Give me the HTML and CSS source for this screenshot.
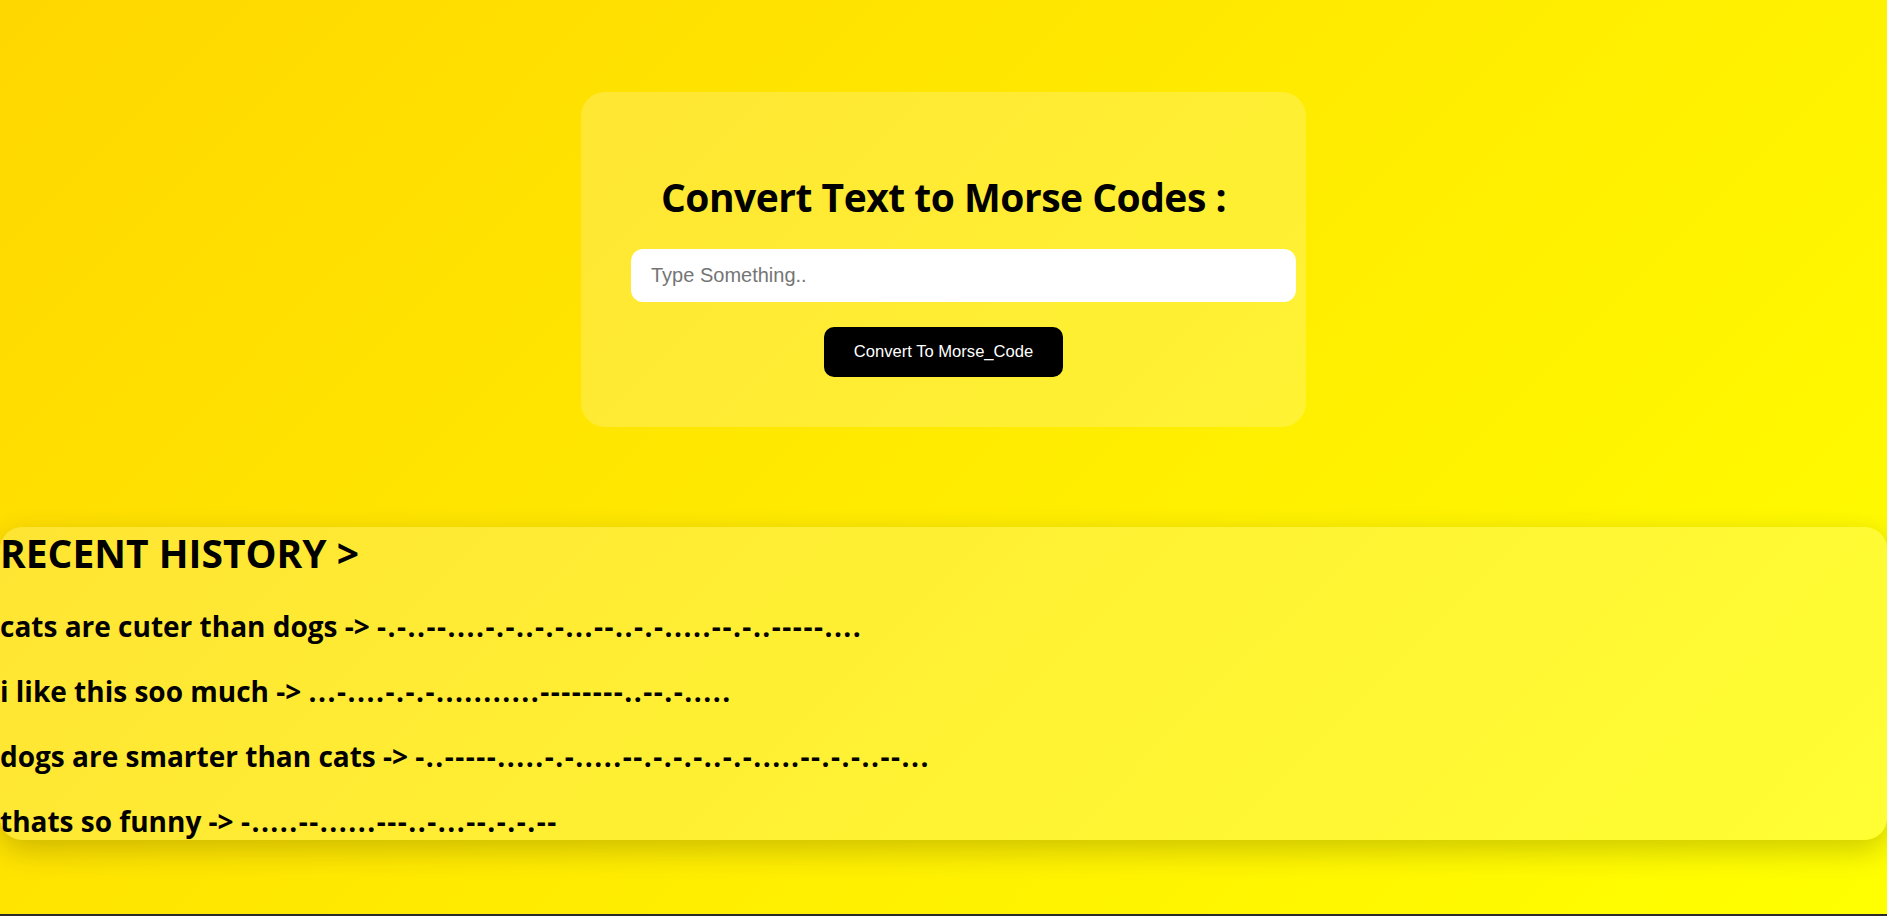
FILE: index.html
```html
<!DOCTYPE html>
<html lang="en">
<head>
<meta charset="utf-8">
<title>Text to Morse Code</title>
<link rel="stylesheet" href="styles.css">
</head>
<body>
<div class="page">
  <main class="converter">
    <h1 class="converter-title">Convert Text to Morse Codes :</h1>
    <input class="text-input" type="text" placeholder="Type Something..">
    <button class="convert-btn" type="button">Convert To Morse_Code</button>
  </main>
  <section class="history">
    <h1 class="history-title">RECENT HISTORY &gt;</h1>
    <ul class="history-list">
      <li class="history-item">cats are cuter than dogs -&gt; <span class="morse">-.-..--....-.-..-.-...--..-.-.....--.-..-----....</span></li>
      <li class="history-item">i like this soo much -&gt; <span class="morse">...-....-.-.-...........--------..--.-.....</span></li>
      <li class="history-item">dogs are smarter than cats -&gt; <span class="morse">-..-----.....-.-.....--.-.-.-..-.-.....--.-.-..--...</span></li>
      <li class="history-item">thats so funny -&gt; <span class="morse">-.....--......---..-...--.-.-.--</span></li>
    </ul>
  </section>
</div>
</body>
</html>
```

FILE: styles.css
```css
html {
  background: #2b2b2b;
}

body {
  margin: 0;
  height: 914px;
  overflow: hidden;
  background: linear-gradient(135deg, #ffd700, #ffff00);
  font-family: "Open Sans", "Liberation Sans", sans-serif;
  color: #000;
}

.page {
  padding-top: 92px;
  display: flex;
  flex-direction: column;
  align-items: center;
}

.converter {
  width: 625px;
  padding: 50px;
  border-radius: 24px;
  background: rgba(255, 255, 255, 0.2);
  display: flex;
  flex-direction: column;
  align-items: center;
}

.converter-title {
  margin: 31px 0 21px;
  font-size: 39px;
  line-height: 48px;
  letter-spacing: -0.5px;
  font-weight: 700;
  text-align: center;
}

.text-input {
  align-self: flex-start;
  box-sizing: content-box;
  width: 100%;
  height: 53px;
  margin: 7px 0 0;
  padding: 0 20px;
  border: none;
  border-radius: 12px;
  background: #fff;
  font-family: "Liberation Sans", Arial, sans-serif;
  font-size: 20px;
  color: #000;
  outline: none;
}

.text-input::placeholder {
  color: #757575;
}

.convert-btn {
  margin-top: 25px;
  height: 50px;
  padding: 0 29.5px;
  border: none;
  border-radius: 10px;
  background: #000;
  color: #fff;
  font-family: "Liberation Sans", Arial, sans-serif;
  font-size: 16.6px;
}

.history {
  align-self: stretch;
  margin-top: 100px;
  padding: 2px 0 1px;
  border-radius: 22px;
  background: rgba(255, 255, 255, 0.2);
  box-shadow: 0 10px 30px rgba(0, 0, 0, 0.2);
}

.history-title {
  margin: 0 0 31px;
  font-size: 39px;
  line-height: 48px;
  font-weight: 700;
}

.history-list {
  list-style: none;
  margin: 0;
  padding: 0;
  display: flex;
  flex-direction: column;
  gap: 29px;
}

.history-item {
  font-size: 28px;
  line-height: 36px;
  font-weight: 700;
}

.morse {
  letter-spacing: 1.5px;
}
```
